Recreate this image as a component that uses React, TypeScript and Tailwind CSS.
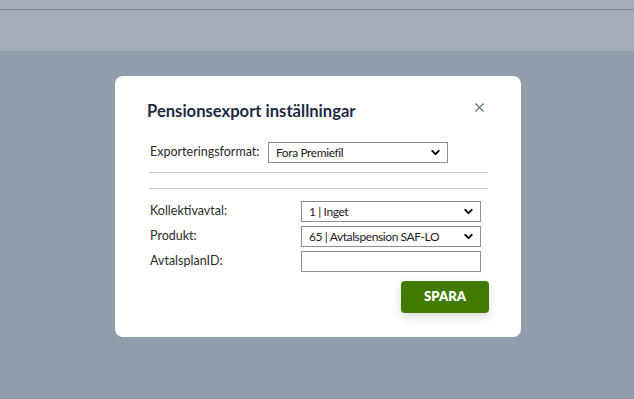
import { ChevronDown, X } from "lucide-react";

const font = { fontFamily: '"Lato", "Liberation Sans", sans-serif' };

function Select({ value }: { value: string }) {
  return (
    <div className="relative w-[180px] h-[21px] border border-[#8f8f8f] bg-white flex items-center pl-[7px] text-[12px] tracking-[-0.4px] text-[#1b1b1b]">
      <span>{value}</span>
      <ChevronDown className="absolute right-[5px] top-[3px] w-[13px] h-[13px] text-black" strokeWidth={3.5} />
    </div>
  );
}

function Row({ label, children }: { label: string; children: React.ReactNode }) {
  return (
    <div className="flex items-center h-[21px]">
      <span className="w-[151px] text-[12.5px] text-[#2a2a2a]">{label}</span>
      {children}
    </div>
  );
}

export default function App() {
  return (
    <div className="h-[399px] w-full bg-[#919eab] flex flex-col" style={font}>
      <div className="h-[51px] bg-[#a6adb6]">
        <div className="h-[10px] border-b border-[#7e8792]" />
      </div>
      <div className="pt-[25px] pl-[115px]">
        <div className="w-[406px] h-[261px] bg-white rounded-[8px] pl-[35px] pr-[33px] pt-[24px] relative">
          <h2 className="text-[16.6px] leading-[22px] font-bold text-[#1d2b40] -ml-[3px]">
            Pensionsexport inställningar
          </h2>
          <X className="absolute right-[34px] top-[24px] w-[15px] h-[15px] text-[#5d6e84]" strokeWidth={1.8} />
          <div className="mt-[20px] flex items-center h-[21px]">
            <span className="w-[118px] text-[12.5px] text-[#2a2a2a]">Exporteringsformat:</span>
            <Select value="Fora Premiefil" />
          </div>
          <div className="mt-[9px] -ml-[1px] border-t border-[#c8c8c8]" />
          <div className="mt-[15px] -ml-[1px] border-t border-[#c8c8c8]" />
          <div className="mt-[12px] flex flex-col gap-[4px]">
            <Row label="Kollektivavtal:">
              <Select value="1 | Inget" />
            </Row>
            <Row label="Produkt:">
              <Select value="65 | Avtalspension SAF-LO" />
            </Row>
            <Row label="AvtalsplanID:">
              <div className="w-[180px] h-[21px] border border-[#8f8f8f] bg-white" />
            </Row>
          </div>
          <div className="flex justify-end mt-[9px] -mr-[1px]">
            <button className="w-[88px] h-[32px] rounded-[4px] bg-[#417a00] text-white text-[13px] font-extrabold shadow-[0_4px_10px_rgba(0,0,0,0.15)]">
              SPARA
            </button>
          </div>
        </div>
      </div>
    </div>
  );
}
